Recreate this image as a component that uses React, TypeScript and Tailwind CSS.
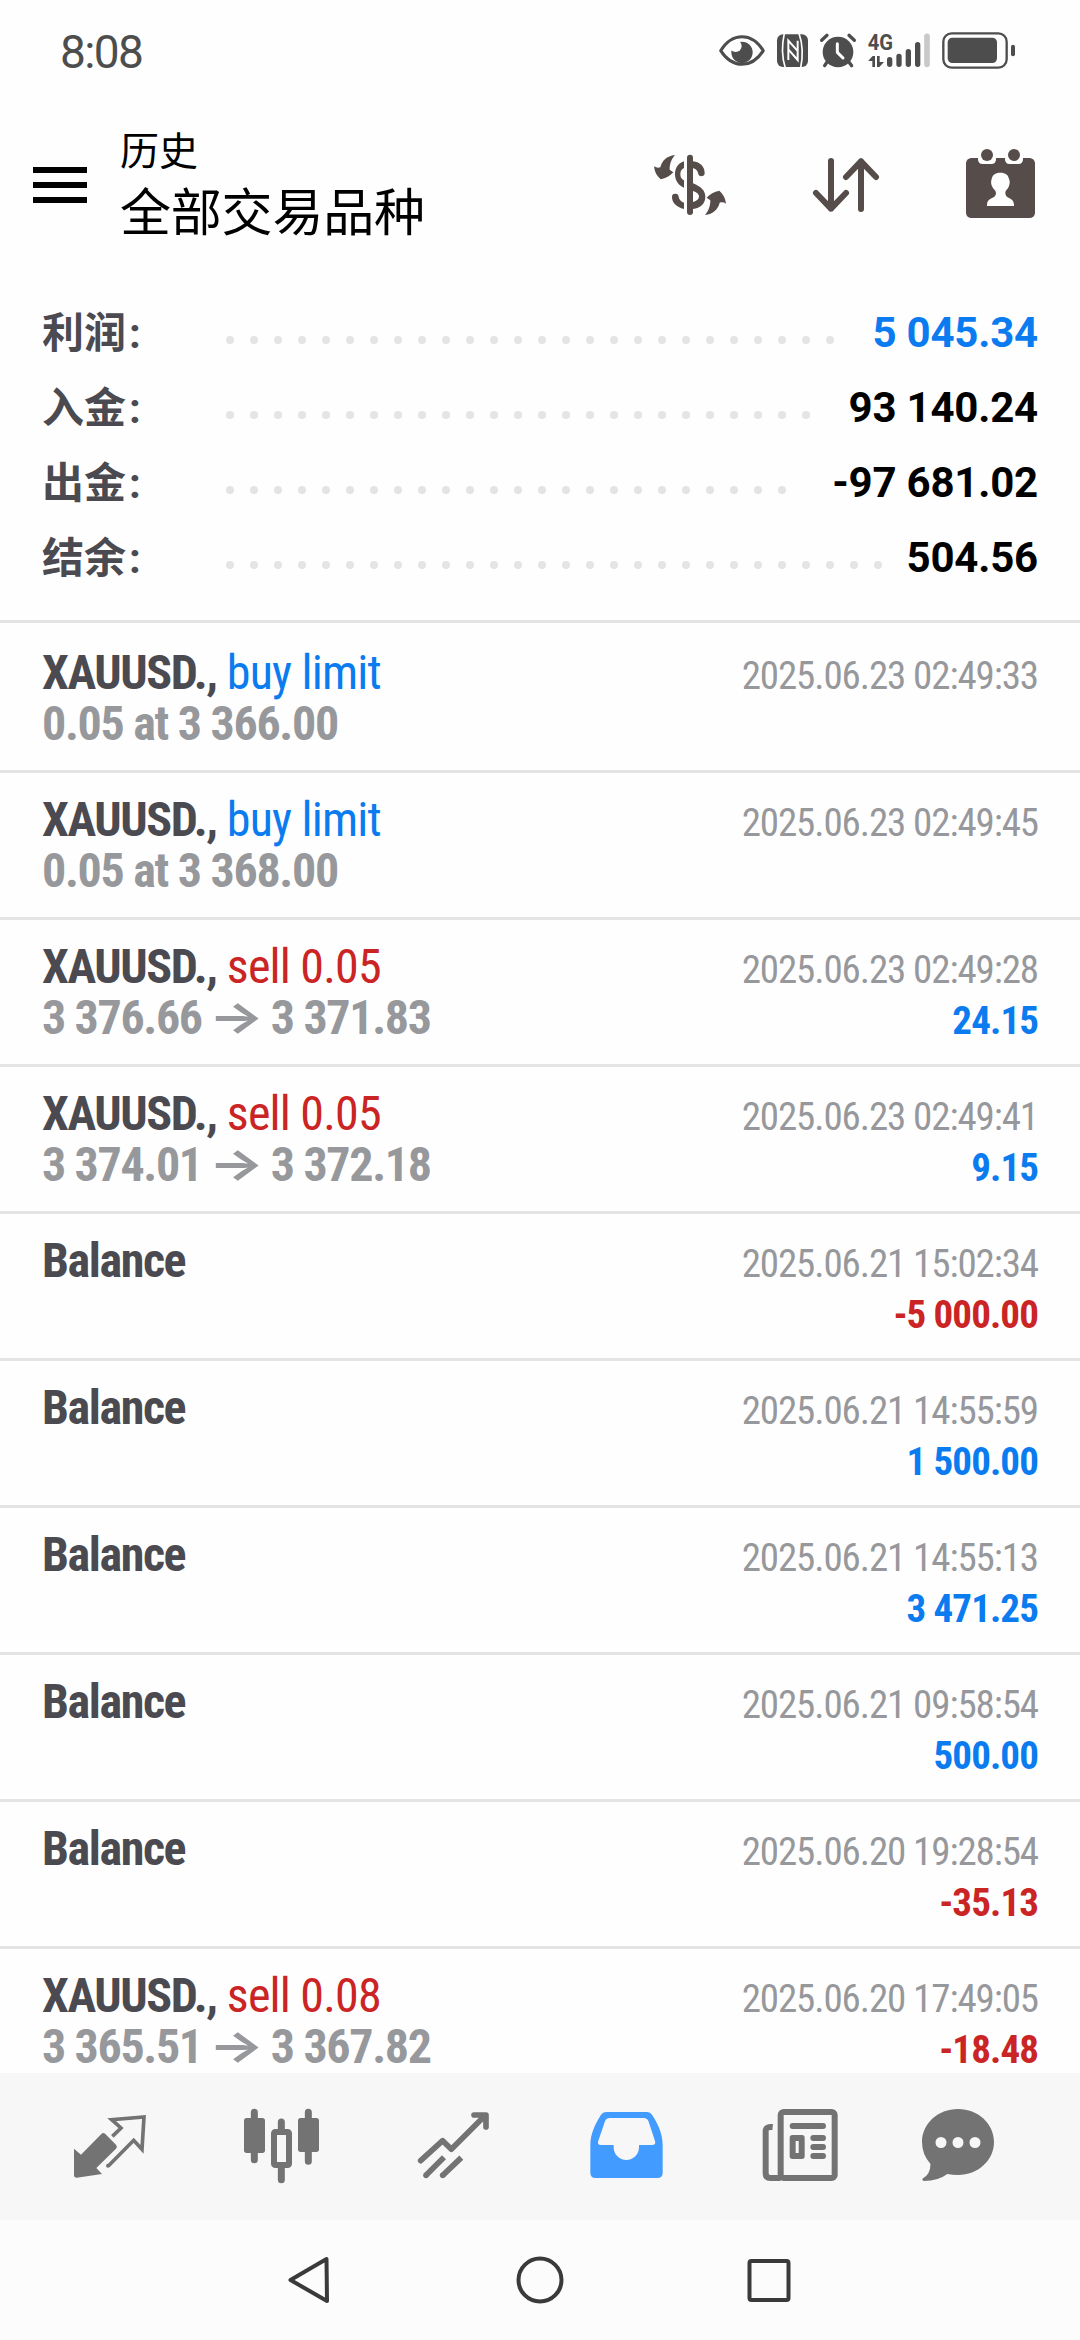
import type { ReactNode } from 'react';

type Deal = {
    symbol: string;
    side?: string;
    sideColor?: string;
    from?: string;
    to?: string;
    detail?: string;
    time: string;
    amount?: string;
    amountColor?: string;
};

const BLUE = 'text-[#0b7bf0]';
const RED = 'text-[#cb2424]';

const summary = [
    { label: '利润', value: '5 045.34', dots: 26, color: BLUE },
    { label: '入金', value: '93 140.24', dots: 25, color: 'text-black' },
    { label: '出金', value: '-97 681.02', dots: 24, color: 'text-black' },
    { label: '结余', value: '504.56', dots: 28, color: 'text-black' },
];

const deals: Deal[] = [
    { symbol: 'XAUUSD.,', side: 'buy limit', sideColor: BLUE, detail: '0.05 at 3 366.00', time: '2025.06.23 02:49:33' },
    { symbol: 'XAUUSD.,', side: 'buy limit', sideColor: BLUE, detail: '0.05 at 3 368.00', time: '2025.06.23 02:49:45' },
    { symbol: 'XAUUSD.,', side: 'sell 0.05', sideColor: RED, from: '3 376.66', to: '3 371.83', time: '2025.06.23 02:49:28', amount: '24.15', amountColor: BLUE },
    { symbol: 'XAUUSD.,', side: 'sell 0.05', sideColor: RED, from: '3 374.01', to: '3 372.18', time: '2025.06.23 02:49:41', amount: '9.15', amountColor: BLUE },
    { symbol: 'Balance', time: '2025.06.21 15:02:34', amount: '-5 000.00', amountColor: RED },
    { symbol: 'Balance', time: '2025.06.21 14:55:59', amount: '1 500.00', amountColor: BLUE },
    { symbol: 'Balance', time: '2025.06.21 14:55:13', amount: '3 471.25', amountColor: BLUE },
    { symbol: 'Balance', time: '2025.06.21 09:58:54', amount: '500.00', amountColor: BLUE },
    { symbol: 'Balance', time: '2025.06.20 19:28:54', amount: '-35.13', amountColor: RED },
    { symbol: 'XAUUSD.,', side: 'sell 0.08', sideColor: RED, from: '3 365.51', to: '3 367.82', time: '2025.06.20 17:49:05', amount: '-18.48', amountColor: RED },
];

function StatusBar() {
    return (
        <div className="flex h-[100px] shrink-0 items-center justify-between pl-[60px] pr-[63px] text-[#4d4d4d]">
            <span className="mt-[3px] text-[46px] leading-none tracking-[-1.6px]">8:08</span>
            <div className="flex gap-[10px]">
                <svg className="h-10 w-12" viewBox="54 60 144 120" fill="none">
                    <path d="M62 122C80 93 104 80 126 80S172 93 190 122C172 150 148 163 126 163S80 150 62 122Z" stroke="currentColor" strokeWidth="9" strokeLinejoin="round" />
                    <circle cx="126" cy="127" r="32" fill="currentColor" />
                    <circle cx="107" cy="108" r="18" fill="#fefefe" />
                </svg>
                <svg className="h-10 w-[33px]" viewBox="228 60 99 120" fill="none">
                    <rect x="231" y="73" width="93" height="98" rx="18" fill="currentColor" />
                    <path d="M253 70C245 105 245 140 256 174M297 70C309 105 309 140 302 174" stroke="#fefefe" strokeWidth="5" />
                    <path d="M265 150V92L294 124M293 92V150L265 118" stroke="#fefefe" strokeWidth="6" />
                </svg>
                <svg className="h-10 w-[38px]" viewBox="357 60 114 120" fill="none">
                    <circle cx="414" cy="126" r="46" fill="currentColor" />
                    <path d="M365 91L381 76M463 91L447 76M384 152L374 167M444 152L455 167" stroke="currentColor" strokeWidth="10" strokeLinecap="round" />
                    <path d="M412 101V127L429 144" stroke="#fefefe" strokeWidth="9" strokeLinecap="round" strokeLinejoin="round" />
                </svg>
                <svg className="h-10 w-16" viewBox="501 60 192 120" fill="currentColor">
                    <text x="503" y="120" fontSize="66" fontWeight="700" textLength="76" lengthAdjust="spacingAndGlyphs">4G</text>
                    <path d="M505 152L518 138H525V171H517V153H505ZM531 138H539V156H552L538 171H531Z" />
                    <path d="M569 149V163M597 139V163M625 125V163M653 104V163" stroke="currentColor" strokeWidth="16" strokeLinecap="round" />
                    <path d="M681 79V163" stroke="#c9c9c9" strokeWidth="17" strokeLinecap="round" />
                </svg>
                <svg className="h-10 w-[76px]" viewBox="723 60 228 120" fill="none">
                    <rect x="730" y="70" width="190" height="103" rx="25" stroke="currentColor" strokeWidth="7" />
                    <rect x="743" y="83" width="148" height="76" rx="14" fill="currentColor" />
                    <rect x="933" y="104" width="12" height="35" rx="6" fill="currentColor" />
                </svg>
            </div>
        </div>
    );
}

function Header() {
    return (
        <header className="flex h-[180px] shrink-0 items-start pl-[33px] pr-11 text-[#564c4a]">
            <div className="mt-[67px] flex w-[54px] flex-col gap-[9px]">
                <div className="h-[6px] bg-black" />
                <div className="h-[6px] bg-black" />
                <div className="h-[6px] bg-black" />
            </div>
            <div className="ml-[33px] mt-[23px] flex flex-col text-black">
                <span className="text-[39px] leading-[58px]">历史</span>
                <span className="mt-[2px] text-[51px] leading-[62px] tracking-[-0.2px]">全部交易品种</span>
            </div>
            <div className="ml-auto mt-12 flex gap-[84px]">
                <svg className="h-[72px] w-[76px]" viewBox="96 84 228 216" fill="currentColor">
                    <rect x="201" y="104" width="18" height="181" rx="9" />
                    <path d="M192 124C173 130 165 146 165 163C165 182 176 197 192 203V181C184 177 181 171 181 163C181 153 185 147 192 144Z" />
                    <path d="M219 124C241 126 254 141 254 158A10 10 0 0 1 235 163C233 152 229 147 219 145Z" />
                    <path d="M219 190C243 200 256 212 256 230C256 251 241 264 219 267V246C231 243 237 238 237 229C237 222 230 217 219 213Z" />
                    <path d="M192 267C168 262 156 247 156 232A10 10 0 0 1 176 230C178 240 183 244 192 248Z" />
                    <path d="M165 105C153 118 149 134 149 149L160 157C150 168 138 175 122 178C110 168 104 156 102 139C108 143 114 144 121 142C126 122 140 108 165 105Z" />
                    <path d="M165 105C153 118 149 134 149 149L160 157C150 168 138 175 122 178C110 168 104 156 102 139C108 143 114 144 121 142C126 122 140 108 165 105Z" transform="rotate(180 210 195)" />
                </svg>
                <svg className="h-[72px] w-[68px]" viewBox="576 84 204 216" fill="none" stroke="currentColor" strokeWidth="18" strokeLinecap="round" strokeLinejoin="round">
                    <path d="M633 123V266M588 219L633 266L678 219" />
                    <path d="M723 267V124M678 171L723 124L768 171" />
                </svg>
                <svg className="h-[72px] w-[72px]" viewBox="1032 84 216 216" fill="currentColor">
                    <rect x="1038" y="114" width="207" height="180" rx="16" />
                    <path d="M1074 104H1128V118Q1128 132 1114 132H1088Q1074 132 1074 118ZM1155 104H1209V118Q1209 132 1195 132H1169Q1155 132 1155 118Z" fill="#fefefe" />
                    <circle cx="1101" cy="105" r="18" />
                    <circle cx="1182" cy="105" r="18" />
                    <path d="M1141 158C1157 158 1165 165 1167 177C1171 184 1169 194 1166 200C1163 208 1156 210 1156 220C1156 237 1182 232 1182 254V258H1101V254C1101 232 1128 237 1128 220C1128 210 1120 208 1117 200C1113 194 1112 184 1115 177C1117 165 1125 158 1141 158Z" fill="#fefefe" />
                </svg>
            </div>
        </header>
    );
}

function Summary() {
    return (
        <section className="shrink-0 border-b-[3px] border-[#e4e4e4] px-[42px] pb-[26px] pt-[14px]">
            {summary.map((row) => (
                <div key={row.label} className="flex h-[75px] items-center">
                    <span className="mt-1 flex w-[176px] items-center text-[42px] font-bold leading-[75px] text-[#4b4a50]">
                        {row.label}
                        <span className="ml-[3px]">:</span>
                    </span>
                    <div className="mt-[17px] flex">
                        {Array.from({ length: row.dots }, (_, i) => (
                            <div key={i} className="mx-2 h-2 w-2 rounded-full bg-[#e4e4e4]" />
                        ))}
                    </div>
                    <span className={`ml-auto mt-[2px] text-[42px] font-bold leading-[75px] tracking-[-0.2px] ${row.color}`}>{row.value}</span>
                </div>
            ))}
        </section>
    );
}

function DealRow({ deal }: { deal: Deal }) {
    return (
        <div className="h-[147px] shrink-0 border-b-[3px] border-[#e4e4e4] px-[42px] pt-[21px] text-[#97989c] [font-stretch:75%]">
            <div className="flex h-[51px] justify-between leading-[51px]">
                <div className="text-[48px] tracking-[-0.8px]">
                    <span className="font-bold tracking-[-1.4px] text-[#4b4a50]">{deal.symbol}</span>
                    {deal.side && <span className={deal.sideColor}> {deal.side}</span>}
                </div>
                <span className="mt-1 text-[39px] tracking-[-1.1px]">{deal.time}</span>
            </div>
            <div className="flex h-[51px] font-bold leading-[51px]">
                {deal.detail && <div className="text-[48px] tracking-[-1.3px]">{deal.detail}</div>}
                {deal.from && (
                    <div className="flex text-[48px] tracking-[-1.35px]">
                        {deal.from}
                        <span className="mx-[14px] -translate-y-px scale-x-[1.36] font-['Inter'] text-[43px] tracking-normal">→</span>
                        {deal.to}
                    </div>
                )}
                {deal.amount && (
                    <span className={`ml-auto mt-1 text-[39px] tracking-[-0.9px] ${deal.amountColor}`}>{deal.amount}</span>
                )}
            </div>
        </div>
    );
}

function TabIcon({ x, active, children }: { x: number; active?: boolean; children: ReactNode }) {
    return (
        <div className="flex justify-center">
            <svg
                className={active ? 'h-20 w-24 text-[#429bff]' : 'h-20 w-24 text-[#737373]'}
                viewBox={`${x} 30 288 240`}
                fill="currentColor"
            >
                {children}
            </svg>
        </div>
    );
}

function TabBar() {
    return (
        <nav className="grid h-[147px] shrink-0 grid-cols-6 bg-[#f7f7f7] px-6 pt-8">
            <TabIcon x={6}>
                <path d="M42 161L63 179L124 117Q130 111 136 117L168 149Q173 155 168 161L109 219L126 237L50 248Q42 248 42 240Z" />
                <path d="M157 124L183 99L155 74L252 66L246 163L221 136L145 213" fill="none" stroke="currentColor" strokeWidth="11" />
                <circle cx="144" cy="212" r="6" />
            </TabIcon>
            <TabIcon x={522}>
                <path d="M583 52V194M745 52V199M664 81V110M664 210V254" stroke="currentColor" strokeWidth="21" strokeLinecap="round" />
                <rect x="552" y="69" width="63" height="105" rx="8" />
                <rect x="714" y="69" width="63" height="102" rx="8" />
                <rect x="642" y="111" width="45" height="99" rx="4" fill="#f7f7f7" stroke="currentColor" strokeWidth="18" />
            </TabIcon>
            <TabIcon x={1038}>
                <g fill="none" stroke="currentColor" strokeWidth="17">
                    <path d="M1082 197L1148 137L1174 163L1276 61M1242 60H1278V96" strokeLinecap="round" strokeLinejoin="round" />
                    <path d="M1098 241L1152 187M1148 241L1204 188" />
                </g>
                <circle cx="1098" cy="241" r="8.5" />
                <circle cx="1148" cy="241" r="8.5" />
            </TabIcon>
            <TabIcon x={24} active>
                <path
                    fillRule="evenodd"
                    d="M108 51H232Q241 51 246 59C266 90 278 117 278 150V233Q278 249 262 249H77Q61 249 61 233V150C61 117 74 90 93 59Q98 51 108 51ZM120 69Q109 69 105 79L85 137Q81 150 93 150H131V157C131 179 148 195 169 195S207 179 207 157V150H246Q259 150 255 138L236 80Q232 69 221 69Z"
                />
            </TabIcon>
            <TabIcon x={540}>
                <g fill="none" stroke="currentColor" strokeWidth="18">
                    <rect x="632" y="51" width="162" height="198" rx="9" />
                    <path d="M608 96Q587 94 587 109V235Q587 249 601 249H632" />
                    <path d="M668 93H759M730 129H759M730 156H759M730 183H759" strokeLinecap="round" />
                </g>
                <path fillRule="evenodd" d="M667 120H696Q704 120 704 128V184Q704 192 696 192H667Q659 192 659 184V128Q659 120 667 120ZM677 138V174H686V138Z" />
            </TabIcon>
            <TabIcon x={1056}>
                <path
                    fillRule="evenodd"
                    d="M1164 42C1224 42 1272 86 1272 141S1224 240 1164 240Q1147 240 1132 237Q1104 258 1062 258Q1054 257 1059 250Q1083 235 1081 206Q1056 178 1056 141C1056 86 1104 42 1164 42ZM1113 126A16.500 16.500 0 1 0 1113 159A16.500 16.500 0 1 0 1113 126ZM1164 126A16.500 16.500 0 1 0 1164 159A16.500 16.500 0 1 0 1164 126ZM1215 126A16.500 16.500 0 1 0 1215 159A16.500 16.500 0 1 0 1215 126Z"
                />
            </TabIcon>
        </nav>
    );
}

function SystemNav() {
    return (
        <div className="flex h-[120px] shrink-0 items-center justify-center gap-[182px] bg-[#fcfcfc] text-[#3a3a3a]">
            <svg className="h-12 w-12" viewBox="0 0 48 48" fill="none" stroke="currentColor" strokeWidth="4" strokeLinejoin="round">
                <path d="M40.500 3L41 45L4.500 24Z" />
            </svg>
            <svg className="h-12 w-12" viewBox="0 0 48 48" fill="none" stroke="currentColor" strokeWidth="4">
                <circle cx="24" cy="24" r="21.500" />
            </svg>
            <svg className="h-12 w-12" viewBox="0 0 48 48" fill="none" stroke="currentColor" strokeWidth="4">
                <rect x="3.500" y="5" width="39" height="39" rx="2" />
            </svg>
        </div>
    );
}

export default function App() {
    return (
        <div lang="zh-CN" className="flex h-[2340px] w-[1080px] flex-col overflow-hidden bg-[#fefefe] font-['Roboto','Noto_Sans_CJK_SC',sans-serif]">
            <StatusBar />
            <Header />
            <Summary />
            <main className="flex min-h-0 flex-1 flex-col overflow-hidden pt-[3px]">
                {deals.map((deal, i) => (
                    <DealRow key={i} deal={deal} />
                ))}
            </main>
            <TabBar />
            <SystemNav />
        </div>
    );
}
